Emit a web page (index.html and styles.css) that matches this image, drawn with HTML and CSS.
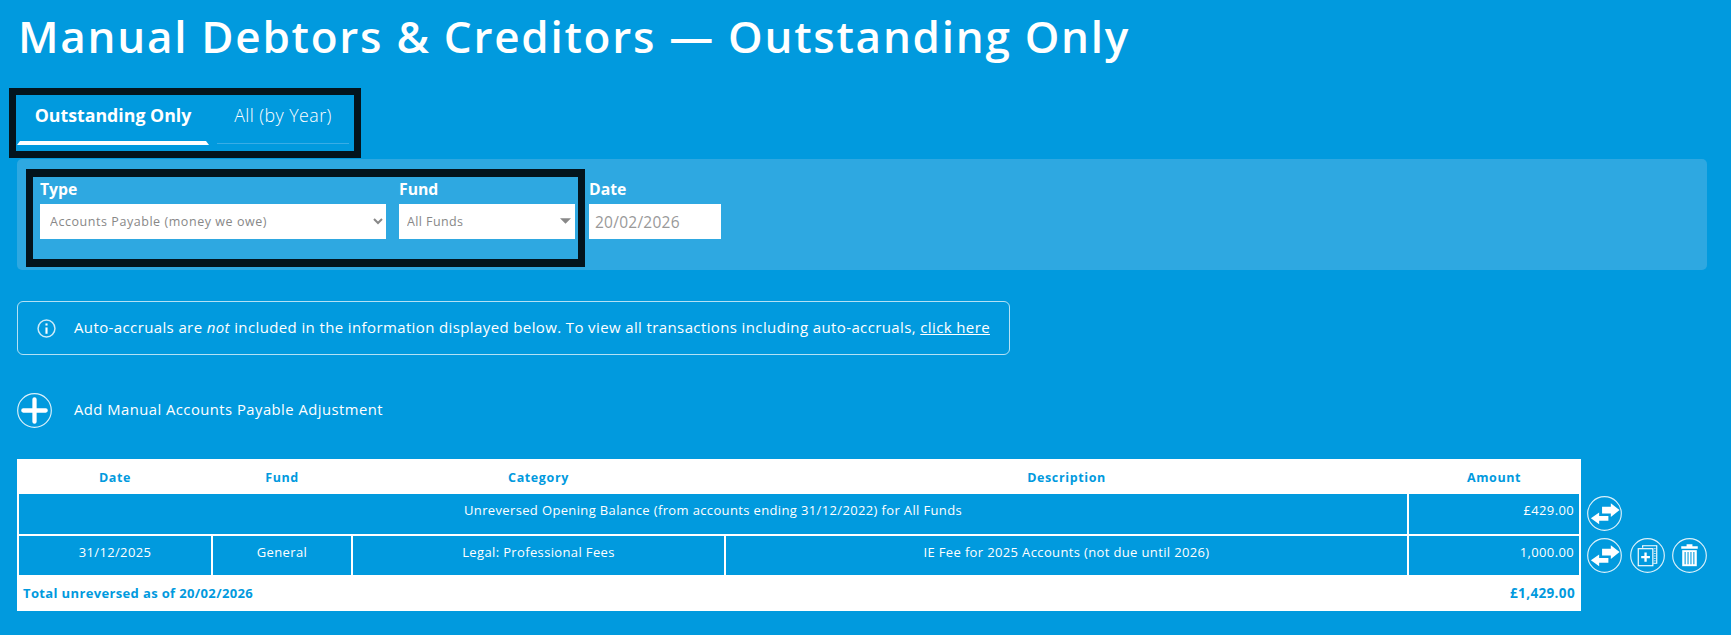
FILE: index.html
```html
<!DOCTYPE html>
<html lang="en">
<head>
<meta charset="utf-8">
<title>Manual Debtors &amp; Creditors</title>
<link rel="stylesheet" href="styles.css">
</head>
<body>
<main class="page">
  <h1 class="title">Manual Debtors &amp; Creditors — Outstanding Only</h1>

  <nav class="tabs">
    <a class="tab tab-active">Outstanding Only</a>
    <a class="tab tab-idle">All (by Year)</a>
  </nav>

  <section class="filters">
    <div class="filter-box">
      <div class="field field-type">
        <label class="field-label">Type</label>
        <select class="control select-native"><option>Accounts Payable (money we owe)</option></select>
      </div>
      <div class="field field-fund">
        <label class="field-label">Fund</label>
        <div class="select-wrap">
          <select class="control select-plain"><option>All Funds</option></select>
          <svg class="caret" viewBox="0 0 12 6"><path d="M0 0h12L6 6z" fill="#888"/></svg>
        </div>
      </div>
    </div>
    <div class="field field-date">
      <label class="field-label">Date</label>
      <input class="control date-input" type="text" value="20/02/2026">
    </div>
  </section>

  <div class="notice">
    <svg class="notice-icon" viewBox="0 0 18 18" fill="none" stroke="#fff">
      <circle cx="9" cy="9" r="8" stroke-width="1.4" opacity=".8"/>
      <path d="M9 8v6" stroke-width="2"/>
      <path d="M9 4.200v2" stroke-width="2"/>
    </svg>
    <p class="notice-text">Auto-accruals are <em>not</em> included in the information displayed below. To view all transactions including auto-accruals, <a class="notice-link">click here</a></p>
  </div>

  <div class="add-row">
    <svg class="round-icon" viewBox="0 0 36 36">
      <circle cx="18" cy="18" r="17.300" fill="none" stroke="#fff" stroke-width="1.2" opacity=".85"/>
      <path d="M18 6.500v23M6.500 18h23" stroke="#fff" stroke-width="4.400" stroke-linecap="round" fill="none"/>
    </svg>
    <span class="add-label">Add Manual Accounts Payable Adjustment</span>
  </div>

  <div class="ledger">
    <table class="ledger-table">
      <colgroup>
        <col class="col-date"><col class="col-fund"><col class="col-cat"><col class="col-desc"><col class="col-amt">
      </colgroup>
      <thead>
        <tr><th>Date</th><th>Fund</th><th>Category</th><th>Description</th><th>Amount</th></tr>
      </thead>
      <tbody>
        <tr class="row-open"><td colspan="4">Unreversed Opening Balance (from accounts ending 31/12/2022) for All Funds</td><td class="num">£429.00</td></tr>
        <tr class="row-item"><td>31/12/2025</td><td>General</td><td>Legal: Professional Fees</td><td>IE Fee for 2025 Accounts (not due until 2026)</td><td class="num">1,000.00</td></tr>
      </tbody>
      <tfoot>
        <tr><td colspan="4" class="total-label">Total unreversed as of 20/02/2026</td><td class="total-num">£1,429.00</td></tr>
      </tfoot>
    </table>

    <div class="actions">
      <div class="action-row">
        <svg class="round-icon" viewBox="0 0 36 36">
          <circle cx="18" cy="18" r="17.300" fill="none" stroke="#fff" stroke-width="1.2" opacity=".85"/>
          <path d="M15.500 11h9V7.500l9 7-9 7V18h-9z" fill="#fff"/>
          <path d="M22 20.500h-9.500V17L4 23l8.500 6v-3.500H22z" fill="#fff"/>
        </svg>
      </div>
      <div class="action-row">
        <svg class="round-icon" viewBox="0 0 36 36">
          <circle cx="18" cy="18" r="17.300" fill="none" stroke="#fff" stroke-width="1.2" opacity=".85"/>
          <path d="M15.500 11h9V7.500l9 7-9 7V18h-9z" fill="#fff"/>
          <path d="M22 20.500h-9.500V17L4 23l8.500 6v-3.500H22z" fill="#fff"/>
        </svg>
        <svg class="round-icon" viewBox="0 0 36 36" fill="none" stroke="#fff">
          <circle cx="18" cy="18" r="17.300" stroke-width="1.2" opacity=".85"/>
          <path d="M13 10V8h14.500v18H24" stroke-width="1.200"/>
          <path d="M24.500 11h2M24.500 13.500h2M24.500 16h2M24.500 18.500h2M24.500 21h2M24.500 23.500h2" stroke-width=".8"/>
          <rect x="8.500" y="11" width="15" height="17.500" stroke-width="1.200"/>
          <path d="M16 15v9.500M11.500 19.700h9" stroke-width="2.400"/>
        </svg>
        <svg class="round-icon" viewBox="0 0 36 36">
          <circle cx="18" cy="18" r="17.300" fill="none" stroke="#fff" stroke-width="1.2" opacity=".85"/>
          <path d="M15 6.500h6v2h5.500v2.500h-17v-2.500H15z" fill="#fff"/>
          <path d="M10.500 12.500h15v16.500h-15z" fill="#fff"/>
          <path d="M13.500 14.500v12.500M16.500 14.500v12.500M19.500 14.500v12.500M22.500 14.500v12.500" stroke="#019ade" stroke-width="1.100"/>
        </svg>
      </div>
    </div>
  </div>
</main>
</body>
</html>
```
FILE: styles.css
```css
* { box-sizing: border-box; }
html, body { margin: 0; height: 100%; }
body {
  background: #019ade;
  color: #fff;
  font-family: "Open Sans", "Noto Sans", sans-serif;
  overflow: hidden;
}
.page { padding: 0 24px 0 17px; }

.title {
  margin: 0;
  padding: 6px 0 0 1px;
  height: 88px;
  font-size: 44px;
  line-height: 61px;
  font-weight: 600;
  letter-spacing: 1.74px;
  white-space: nowrap;
}

.tabs {
  display: flex;
  width: 352px;
  height: 70px;
  margin-left: -8px;
  border: 7px solid #03141d;
}
.tab { display: block; height: 50px; line-height: 41px; font-size: 17.750px; text-align: center; }
.tab-active {
  position: relative;
  width: 192px;
  margin-left: 1px;
  font-weight: 700;
  border-bottom: 4px solid #fff;
  border-left: 3px solid transparent;
  border-right: 3px solid transparent;
}
.tab-idle {
  width: 132px;
  margin-left: 8px;
  height: 49px;
  font-weight: 300;
  letter-spacing: .45px;
  border-bottom: 1px solid #39ade6;
}

.filters {
  display: flex;
  align-items: flex-start;
  height: 111px;
  margin-top: 1px;
  padding: 10px 9px 3px;
  background: #2ea8e1;
  border-radius: 5px;
}
.filter-box {
  display: flex;
  width: 559px;
  height: 98px;
  padding: 0 3px 0 7px;
  gap: 13px;
  border: 7px solid #03141d;
  border-top-width: 8px;
  border-bottom-width: 8px;
}
.field-type { width: 346px; }
.field-fund { width: 176px; }
.field-date { width: 132px; margin-left: 4px; padding-top: 8px; }
.field-label {
  display: block;
  height: 27px;
  font-size: 15.750px;
  line-height: 20px;
  font-weight: 700;
  padding-top: 2px;
}
.control {
  display: block;
  width: 100%;
  height: 35px;
  border: 0;
  border-radius: 0;
  background: #fff;
  color: #888;
  font-family: inherit;
  outline: 0;
}
.select-native { font-size: 12.500px; letter-spacing: .55px; padding: 0 2px 0 6px; }
.select-wrap { position: relative; }
.select-plain {
  appearance: none;
  -webkit-appearance: none;
  font-size: 12.500px;
  letter-spacing: .4px;
  padding: 0 8px 1px 8px;
}
.caret { position: absolute; top: 14px; right: 4px; width: 11px; height: 6px; }
.date-input { font-size: 15.500px; color: #999; padding: 0 6px; letter-spacing: .25px; }

.notice {
  display: flex;
  align-items: center;
  width: 993px;
  height: 54px;
  margin-top: 31px;
  padding: 0 0 2px 19px;
  border: 1px solid rgba(255, 255, 255, .7);
  border-radius: 6px;
}
.notice-icon { width: 19px; height: 19px; flex: none; margin-top: 3px; }
.notice-text { margin: 0 0 0 18px; font-size: 15px; letter-spacing: .38px; white-space: nowrap; }
.notice-link { color: #fff; text-decoration: underline; }

.add-row { display: flex; align-items: center; height: 35px; margin-top: 38px; }
.round-icon { display: block; width: 35px; height: 35px; flex: none; }
.add-label { margin-left: 22px; font-size: 14.800px; letter-spacing: .47px; margin-top: -4px; }

.ledger { display: flex; align-items: flex-start; margin-top: 31px; }
.ledger-table {
  width: 1562px;
  table-layout: fixed;
  border-collapse: collapse;
  background: #fff;
  font-size: 13px;
  letter-spacing: .36px;
  flex: none;
}
.col-date { width: 194px; }
.col-fund { width: 140px; }
.col-cat { width: 373px; }
.col-desc { width: 683px; }
.col-amt { width: 172px; }
.ledger-table th {
  height: 34px;
  padding: 3px 0 0;
  background: #fff;
  color: #019ade;
  font-weight: 700;
  letter-spacing: .62px;
  font-size: 12.500px;
  border-bottom: 2px solid #fff;
}
.ledger-table tbody td {
  padding: 0 10px;
  vertical-align: top;
  text-align: center;
  background: #019ade;
  color: #fff;
  border: 2px solid #fff;
}
.row-open td { height: 42px; padding-top: 7px !important; }
.row-item td { height: 41px; padding-top: 7px !important; }
.ledger-table tbody td.num { text-align: right; padding-right: 5px; padding-left: 0; }
.ledger-table tfoot td {
  height: 35px;
  padding: 0 5px 2px;
  color: #019ade;
  font-weight: 700;
  background: #fff;
}
.total-label { text-align: left; }
.total-num { text-align: right; font-size: 13.500px; }

.actions { padding: 37px 0 0 6px; }
.action-row { display: flex; gap: 7.500px; margin-bottom: 7px; height: 35px; }
```
